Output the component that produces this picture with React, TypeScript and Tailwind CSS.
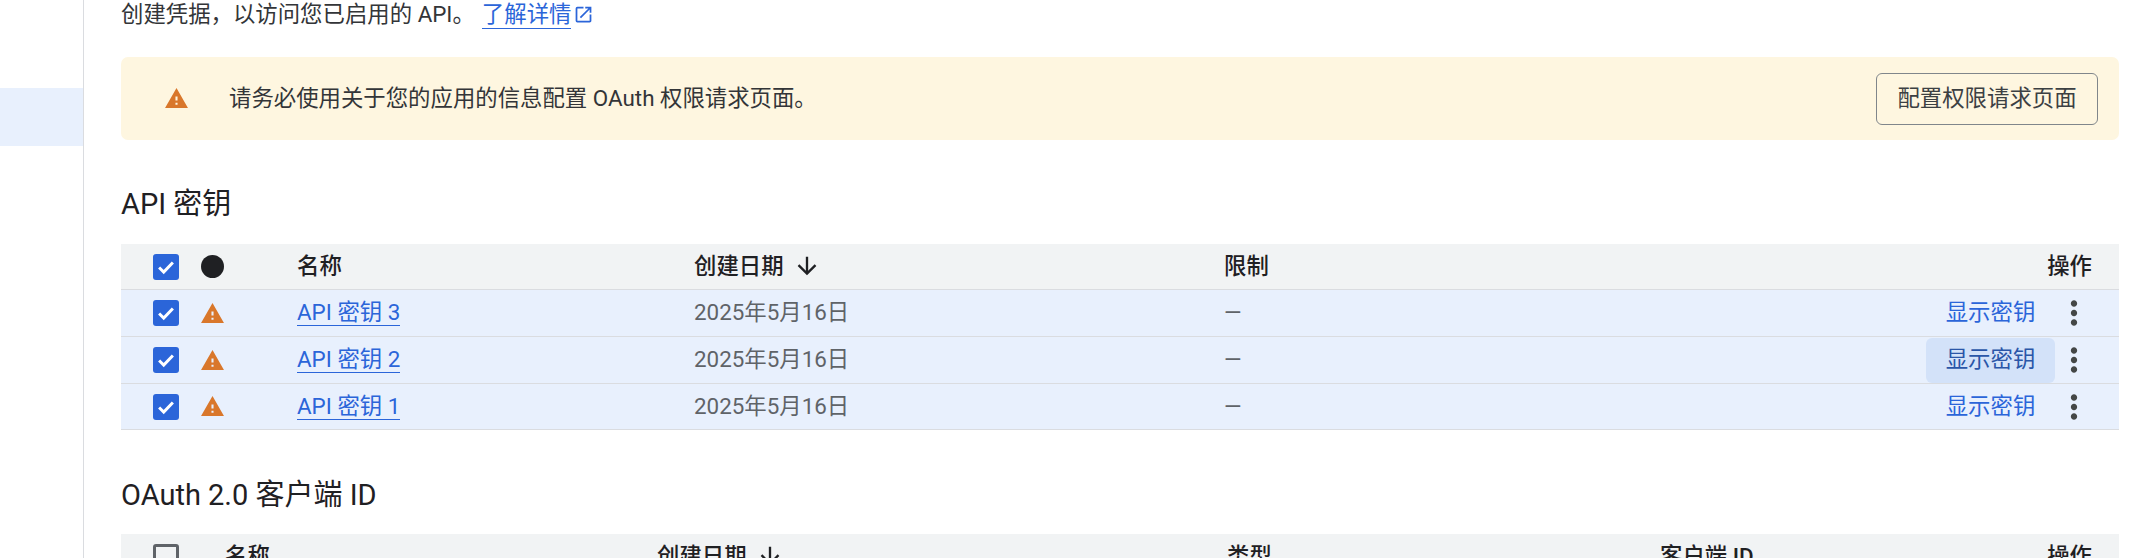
import React from 'react';

const Check = () => (
  <span className="w-[26px] h-[26px] rounded-[3px] bg-[#2b65d9] flex items-center justify-center">
    <svg viewBox="0 0 24 24" className="w-[22px] h-[22px]" fill="none" stroke="#fff" strokeWidth="3.2">
      <path d="M4.5 12.5l5 5L19.5 7" />
    </svg>
  </span>
);

const Warn = ({ className = 'w-[25px] h-[25px]' }: { className?: string }) => (
  <svg viewBox="0 0 24 24" className={className} fill="#d9772b">
    <path d="M1 21h22L12 2 1 21zm12-3h-2v-2h2v2zm0-4h-2v-4h2v4z" />
  </svg>
);

const Arrow = () => (
  <svg viewBox="0 0 24 24" className="w-[28px] h-[28px] ml-[9px]" fill="#1f2023">
    <path d="M20 12l-1.41-1.41L13 16.17V4h-2v12.17l-5.58-5.59L4 12l8 8 8-8z" />
  </svg>
);

const Dots = () => (
  <svg viewBox="0 0 24 24" className="w-[38px] h-[38px]" fill="#444746">
    <path d="M12 8c1.1 0 2-.9 2-2s-.9-2-2-2-2 .9-2 2 .9 2 2 2zm0 2c-1.1 0-2 .9-2 2s.9 2 2 2 2-.9 2-2-.9-2-2-2zm0 6c-1.1 0-2 .9-2 2s.9 2 2 2 2-.9 2-2-.9-2-2-2z" />
  </svg>
);

const keys = [
  { name: 'API 密钥 3', hover: false, h: 'h-[47px]' },
  { name: 'API 密钥 2', hover: true, h: 'h-[47px]' },
  { name: 'API 密钥 1', hover: false, h: 'h-[46px]' },
];

export default function App() {
  return (
    <div className="w-[2143px] h-[558px] overflow-hidden bg-white flex text-[#1f2023] font-['Roboto','Noto_Sans_CJK_SC',sans-serif]">
      <aside className="w-[84px] shrink-0 border-r border-[#dadce0] pt-[88px]">
        <div className="h-[58px] bg-[#e8f0fd]" />
      </aside>

      <main className="flex-1 pl-[37px] pr-[24px]">
        <p className="h-[57px] pt-[1px] text-[22.4px] leading-[26px] text-[#333538]">
          创建凭据，以访问您已启用的 API。
          <a className="ml-[7px] text-[#2b65d9] border-b border-[#2b65d9] pb-[1px]">了解详情</a>
          <svg viewBox="0 0 24 24" className="inline-block w-[21px] h-[21px] ml-[2px] align-[-3px]" fill="#2b65d9">
            <path d="M19 19H5V5h7V3H5a2 2 0 0 0-2 2v14a2 2 0 0 0 2 2h14c1.1 0 2-.9 2-2v-7h-2v7zM14 3v2h3.59l-9.83 9.83 1.41 1.41L19 6.41V10h2V3h-7z" />
          </svg>
        </p>

        <div className="h-[83px] rounded-[7px] bg-[#fef6e0] flex items-center pl-[43px] pr-[21px]">
          <Warn />
          <span className="ml-[40px] text-[22.4px] text-[#333538]">请务必使用关于您的应用的信息配置 OAuth 权限请求页面。</span>
          <button className="ml-auto w-[222px] h-[52px] rounded-[6px] border border-[#80868b] text-[22.4px] text-[#3c4043]">
            配置权限请求页面
          </button>
        </div>

        <h2 className="mt-[44px] h-[60px] text-[29px] leading-[40px] text-[#1f2023]">API 密钥</h2>

        <div className="grid grid-cols-[176px_397px_530px_1fr] items-center h-[46px] bg-[#f1f3f4] border-b border-[#dadce0] text-[22.4px] font-medium">
          <div className="flex items-center pl-[32px] gap-[22px]">
            <Check />
            <span className="w-[23px] h-[23px] rounded-full bg-[#1f2023]" />
          </div>
          <span>名称</span>
          <span className="flex items-center">创建日期<Arrow /></span>
          <div className="flex justify-between pr-[27px]">
            <span>限制</span>
            <span>操作</span>
          </div>
        </div>

        {keys.map((k) => (
          <div key={k.name} className={`grid grid-cols-[176px_397px_530px_1fr] items-center ${k.h} bg-[#e8f0fd] border-b border-[#dadce0] text-[22.4px]`}>
            <div className="flex items-center pl-[32px] gap-[22px]">
              <Check />
              <Warn className="w-[25px] h-[25px] -ml-[1px]" />
            </div>
            <span>
              <a className="text-[#2b65d9] border-b border-[#2b65d9]">{k.name}</a>
            </span>
            <span className="text-[#5f6368]">2025年5月16日</span>
            <div className="flex items-center justify-between pr-[26px]">
              <span className="text-[#5f6368]">—</span>
              <div className="flex items-center">
                <button className={`w-[129px] h-[45px] rounded-[6px] ${k.hover ? 'bg-[#d3e2f9] text-[#2a56a8]' : 'text-[#2b65d9]'}`}>显示密钥</button>
                <Dots />
              </div>
            </div>
          </div>
        ))}

        <h2 className="mt-[45px] h-[59px] text-[29px] leading-[40px] text-[#1f2023]">OAuth 2.0 客户端 ID</h2>

        <div className="grid grid-cols-[104px_432px_570px_433px_1fr] items-center h-[46px] bg-[#f1f3f4] border-b border-[#dadce0] text-[22.4px] font-medium">
          <div className="pl-[32px]">
            <span className="block w-[26px] h-[26px] rounded-[3px] border-[3px] border-[#5f6368]" />
          </div>
          <span>名称</span>
          <span className="flex items-center">创建日期<Arrow /></span>
          <span>类型</span>
          <div className="flex justify-between pr-[27px]">
            <span>客户端 ID</span>
            <span>操作</span>
          </div>
        </div>
      </main>
    </div>
  );
}
